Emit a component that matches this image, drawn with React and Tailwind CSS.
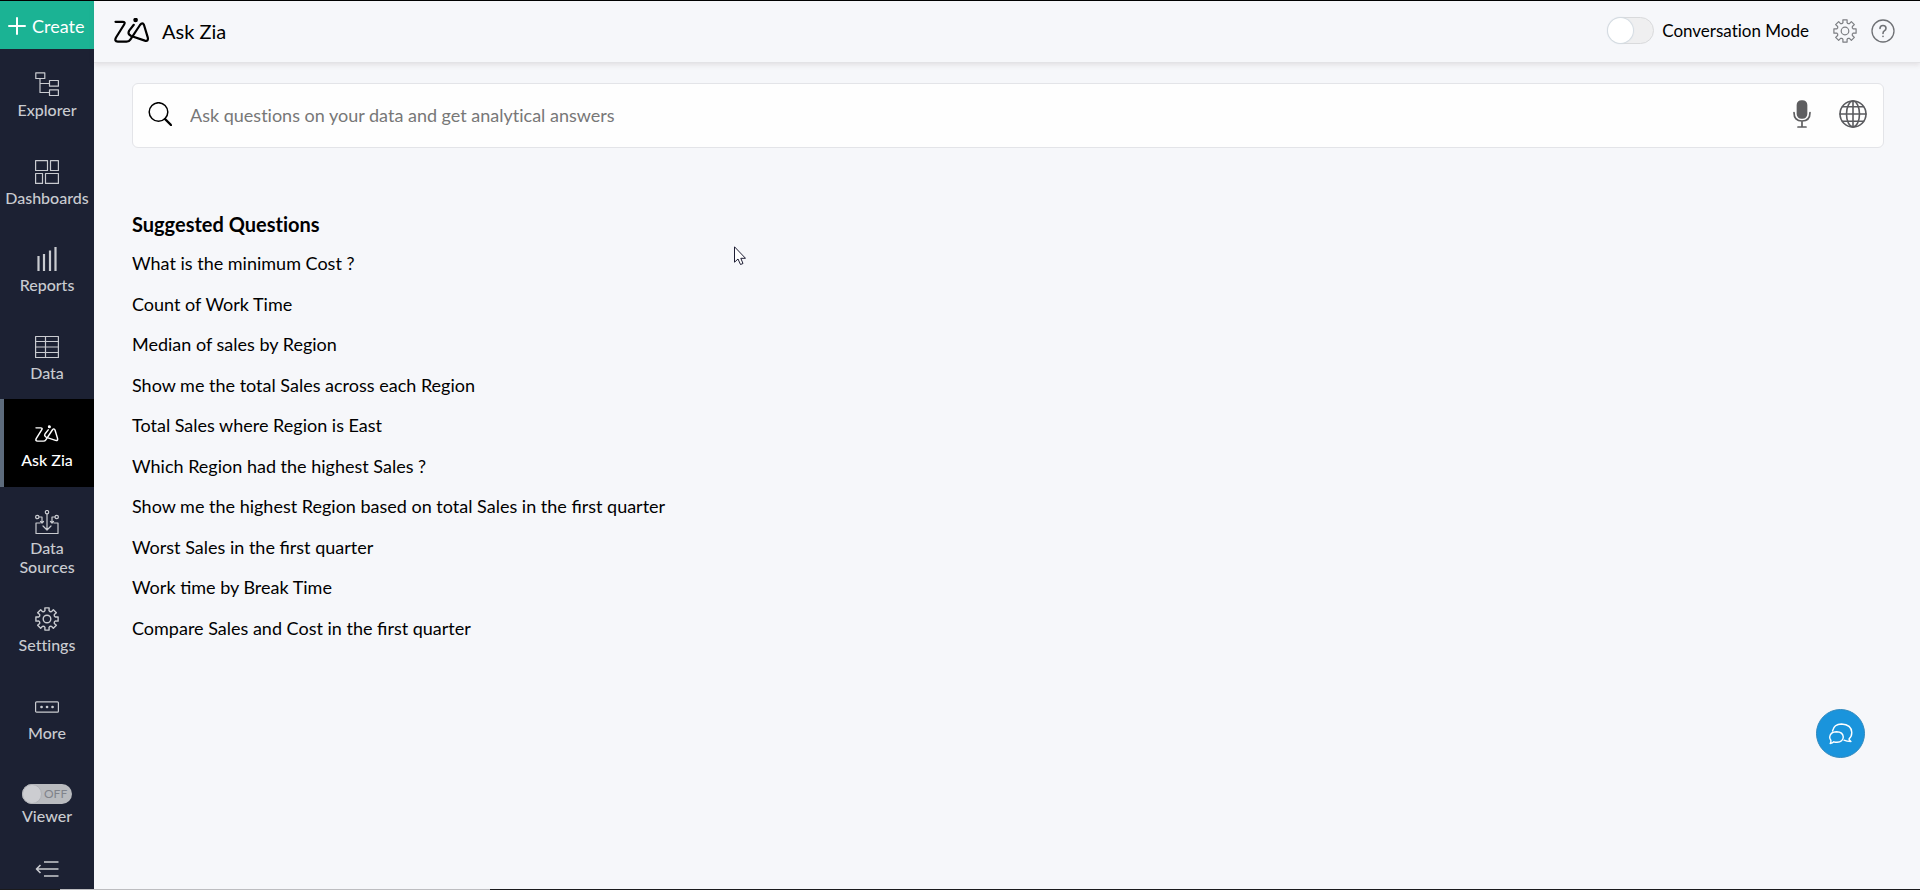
import { useState } from "react";

// outline of a cog with 8 teeth, centred in a 24x24 box
function cogPath() {
  const pts = [];
  for (let i = 0; i < 8; i++) {
    const a = (i * Math.PI) / 4 - Math.PI / 2;
    [[-0.36, 8], [-0.24, 8.6], [-0.19, 11.3], [0.19, 11.3], [0.24, 8.6], [0.36, 8]].forEach(([d, r]) => {
      pts.push(`${(12 + r * Math.cos(a + d)).toFixed(2)} ${(12 + r * Math.sin(a + d)).toFixed(2)}`);
    });
  }
  return `M${pts.join("L")}Z`;
}

function Svg({ size = "size-6", box = "0 0 24 24", width = 1.2, children }) {
  return (
    <svg className={size} viewBox={box} fill="none" stroke="currentColor" strokeWidth={width} strokeLinejoin="round" strokeLinecap="round" aria-hidden="true">
      {children}
    </svg>
  );
}

function CogIcon({ size, width }) {
  return (
    <Svg size={size} width={width}>
      <path d={cogPath()} />
      <circle cx="12" cy="12" r="3.8" />
    </Svg>
  );
}

function ZiaLogo({ size, width }) {
  return (
    <Svg size={size} box="0 0 36 26" width={width}>
      <path d="M1.500 3.800H8.500Q11.800 3.800 10 6.800L2 19.500Q0 23.500 3.800 23.700H12.500Q15 23.700 16.500 21.300L26 7Q28.600 3.600 30 7L33.800 19.600Q34.600 23.600 30.800 22.600L17.200 18Q13.200 16.200 15.200 12.600L19.800 6.800" />
      <circle cx="21.600" cy="2" r="1.200" fill="currentColor" />
    </Svg>
  );
}

const mainItems = [
  {
    name: "Explorer",
    icon: (
      <Svg>
        <path d="M.8.8H9.800V6.500H.8ZM14.500 8.500H23.400V14.200H14.500ZM14.500 17.800H23.400V23.500H14.500ZM5 6.500V20.500H14.500M5 11.500H14.500" />
      </Svg>
    ),
  },
  {
    name: "Dashboards",
    icon: (
      <Svg>
        <path d="M.6.6H12.500V10.500H.6ZM15.500.6H23.400V10.500H15.500ZM.6 13.500H7.500V23.400H.6ZM10.500 13.500H23.400V23.400H10.500Z" />
      </Svg>
    ),
  },
  {
    name: "Reports",
    icon: (
      <Svg width={2.2}>
        <path d="M3.500 9V24M9 7V24M15 3.500V24M20.500 0V24" strokeLinecap="butt" />
      </Svg>
    ),
  },
  {
    name: "Data",
    icon: (
      <Svg>
        <path d="M.6 1.500H23.400V22.500H.6ZM.6 6.500H23.400M.6 12H23.400M.6 17.500H23.400M10.500 1.500V22.500" />
      </Svg>
    ),
  },
];

const otherItems = [
  {
    name: "Data Sources",
    icon: (
      <Svg>
        <path d="M5 13H1V23.500H23V13H19M12 4V20M8 16L12 20L16 16M4 7H7V13M5.500 11.500L7 13L8.500 11.500M20 7H17V13M15.500 11.500L17 13L18.500 11.500" />
        <circle cx="12" cy="2.200" r="1.700" />
        <circle cx="2.300" cy="7" r="1.700" />
        <circle cx="21.700" cy="7" r="1.700" />
      </Svg>
    ),
  },
  { name: "Settings", icon: <CogIcon width={1.4} /> },
  {
    name: "More",
    icon: (
      <Svg>
        <rect x=".6" y="6.800" width="22.800" height="10.400" rx="1" />
        <path d="M6.500 12H6.600M12 12H12.100M17.500 12H17.600" strokeWidth="2.600" />
      </Svg>
    ),
  },
];

const questions = [
  "What is the minimum Cost ?",
  "Count of Work Time",
  "Median of sales by Region",
  "Show me the total Sales across each Region",
  "Total Sales where Region is East",
  "Which Region had the highest Sales ?",
  "Show me the highest Region based on total Sales in the first quarter",
  "Worst Sales in the first quarter",
  "Work time by Break Time",
  "Compare Sales and Cost in the first quarter",
];

function NavItem({ name, icon, height = "" }) {
  return (
    <a href="#" className={`flex flex-col items-center pt-[21px] ${height}`}>
      <span className="flex h-7 items-center">{icon}</span>
      <span className="mt-0.5 w-min text-center leading-[19px]">{name}</span>
    </a>
  );
}

function Sidebar() {
  const [viewer, setViewer] = useState(false);

  return (
    <aside className="flex w-[94px] shrink-0 flex-col bg-[#1c2133] text-base font-medium text-[#c9cbd0]">
      <button className="flex h-12 items-center gap-1.5 bg-[#1bb394] pt-0.5 pl-2 text-lg font-normal text-white">
        <Svg size="size-[18px]" box="0 0 18 18" width={2}>
          <path d="M9 1V17M1 9H17" />
        </Svg>
        Create
      </button>
      <nav className="flex flex-col">
        <div className="grid h-[350px] auto-rows-fr">
          {mainItems.map((item) => (
            <NavItem key={item.name} {...item} />
          ))}
        </div>
        <a href="#" className="flex h-[88px] flex-col items-center border-l-4 border-[#5d6b7c] bg-black pt-[21px] pr-1 text-white">
          <span className="flex h-7 items-center">
            <ZiaLogo size="h-[18px] w-6" width={2.2} />
          </span>
          <span className="mt-0.5 leading-[19px]">Ask Zia</span>
        </a>
        {otherItems.map((item) => (
          <NavItem key={item.name} {...item} height={item.name === "Data Sources" ? "h-[97px]" : "h-[88px]"} />
        ))}
      </nav>
      <label className="mt-6 flex flex-col items-center gap-px leading-[22px]">
        <input type="checkbox" className="sr-only" checked={viewer} onChange={(e) => setViewer(e.target.checked)} />
        <span className="flex h-5 w-[50px] items-center rounded-full bg-[#b9bbbf] text-xs font-normal text-[#80838b]">
          <span className="mr-0.5 size-5 rounded-full border border-[#b0b2b7] bg-[#cccdd1]" />
          {viewer ? "ON" : "OFF"}
        </span>
        Viewer
      </label>
      <button aria-label="Collapse menu" className="mt-[30px] flex justify-center">
        <Svg width={1.6}>
          <path d="M9 5H23.500M2 12H23.500M9 19H23.500M5.500 8L1.500 12L5.500 16" strokeLinecap="butt" />
        </Svg>
      </button>
    </aside>
  );
}

function Header() {
  return (
    <header className="flex h-[62px] items-center border-b border-[#e3e3e6] pt-2.5 pr-[25px] pb-3 pl-5 shadow-[0_2px_5px_rgba(90,60,60,0.12)]">
      <ZiaLogo size="h-[26px] w-9" width={2.2} />
      <h1 className="ml-3 text-xl">Ask Zia</h1>
      <label className="ml-auto flex items-center gap-2 text-[17px]">
        <input type="checkbox" className="peer sr-only" />
        <span className="flex h-[27px] w-[47px] rounded-full border border-[#d9dadc] bg-[#efeff0] peer-checked:justify-end">
          <span className="size-[25px] rounded-full bg-white shadow-[0_0_1px_1px_#d3dbe2]" />
        </span>
        Conversation Mode
      </label>
      <button aria-label="Settings" className="ml-6 text-[#7c7e82]">
        <CogIcon width={1.2} />
      </button>
      <button aria-label="Help" className="ml-3.5 text-[#6f7175]">
        <Svg width={1.3}>
          <circle cx="12" cy="12" r="11" />
          <path d="M9 9.500Q9 6.500 12 6.500T15 9.300Q15 11 13.300 11.900Q12 12.700 12 14.500M12 17.300V17.500" strokeWidth="1.600" />
        </Svg>
      </button>
    </header>
  );
}

function SearchBar() {
  return (
    <form className="flex h-[65px] items-center rounded-md border border-[#e3e4e8] bg-[#fefefe] pr-4 pb-1 pl-[15px]" onSubmit={(e) => e.preventDefault()}>
      <Svg size="size-6" width={1.5}>
        <circle cx="10.500" cy="10" r="9.300" />
        <path d="M17 17L23 23" strokeWidth="2.400" />
      </Svg>
      <input
        type="text"
        aria-label="Ask a question"
        placeholder="Ask questions on your data and get analytical answers"
        className="ml-[18px] min-w-0 flex-1 pt-0.5 text-lg outline-none placeholder:text-[#777777]"
      />
      <button type="button" aria-label="Voice input" className="text-[#5e5e60]">
        <Svg size="h-7 w-[18px]" box="0 0 18 28" width={1.7}>
          <rect x="4.500" y="1" width="9" height="17" rx="4" fill="currentColor" />
          <path d="M1 12.500Q1 21 9 21T17 12.500M9 21V27M5 27H13" />
        </Svg>
      </button>
      <button type="button" aria-label="Language" className="ml-7 text-[#5a5b5f]">
        <Svg size="size-7" box="0 0 28 28" width={1.6}>
          <circle cx="14" cy="14" r="13" />
          <ellipse cx="14" cy="14" rx="6.500" ry="13" />
          <path d="M14 1V27M1 14H27M3.500 6.800H24.500M3.500 21.200H24.500" />
        </Svg>
      </button>
    </form>
  );
}

export default function App() {
  return (
    <div className="flex min-h-screen flex-col bg-[#f6f7fa] font-['Lato',sans-serif] text-black [font-variant-ligatures:none]">
      <div className="h-px bg-black" />
      <div className="flex flex-1">
        <Sidebar />
        <div className="flex min-w-0 flex-1 flex-col">
          <Header />
          <main className="pt-5 pr-9 pl-[38px]">
            <SearchBar />
            <h2 className="mt-[61px] text-xl leading-[30px] font-bold">Suggested Questions</h2>
            <ul className="mt-1 grid h-[405px] auto-rows-fr items-center text-lg [font-variant-ligatures:normal]">
              {questions.map((q) => (
                <li key={q}>
                  <a href="#">{q}</a>
                </li>
              ))}
            </ul>
          </main>
        </div>
      </div>
      <div className="flex h-px bg-[#1a1a1c]">
        <div className="ml-[60px] w-[430px] bg-[#bdbdc0]" />
      </div>

      <button aria-label="Chat" className="fixed right-[55px] bottom-[132px] flex size-[49px] items-center justify-center rounded-full border border-[#2f88bd] bg-[#1a94dc] text-white">
        <Svg width={1.4}>
          <path d="M3.500 9Q5 2 12.500 2Q22.500 2.500 22.800 10.500Q22.800 14.500 20 17Q20.300 18.500 22 19.500Q17.500 19.500 15 18.200" />
          <path d="M1.200 21.500Q2.200 20 1.800 18.200Q.6 16.500.7 15Q1.200 9.800 7.500 9.700Q14 9.900 14.300 15Q14 20 8 20.300Q6 20.300 4.800 19.800Q3.500 21.300 1.200 21.500Z" />
        </Svg>
      </button>
      <svg className="pointer-events-none fixed top-[246px] left-[734px] h-5 w-3" viewBox="0 0 12 20" fill="white" stroke="#1d1d33" strokeWidth="1" aria-hidden="true">
        <path d="M.5.800V16.200L4 13L6.500 18.500L9 17.500L6.800 12.300H11.500Z" />
      </svg>
    </div>
  );
}
